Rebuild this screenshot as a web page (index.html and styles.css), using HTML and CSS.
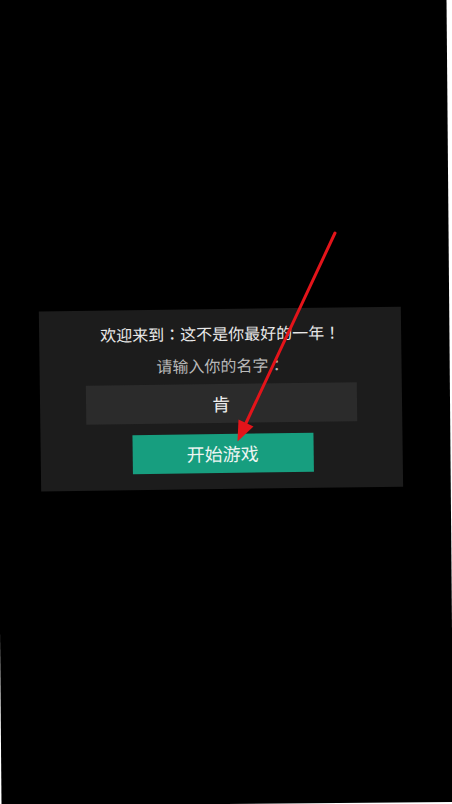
FILE: index.html
```html
<!DOCTYPE html>
<html lang="zh-CN">
<head>
<meta charset="utf-8">
<title>这不是你最好的一年</title>
<link rel="stylesheet" href="styles.css">
</head>
<body>
<div class="screen">
  <div class="panel">
    <div class="title">欢迎来到<span class="punct" lang="zh-TW">：</span>这不是你最好的一年<span class="punct" lang="zh-TW">！</span></div>
    <div class="prompt">请输入你的名字<span class="punct" lang="zh-TW">：</span></div>
    <div class="name-input">肯</div>
    <div class="start-btn">开始游戏</div>
  </div>
</div>
<svg class="arrow" width="452" height="804" viewBox="0 0 452 804">
  <line x1="335" y1="233" x2="246" y2="423" stroke="#e3141a" stroke-width="3" stroke-linecap="round"/>
  <polygon points="237.5,441.5 253.5,426.5 238.5,419.5" fill="#e3141a"/>
</svg>
</body>
</html>
```
FILE: styles.css
```css
html, body {
  margin: 0;
  padding: 0;
  background: #ffffff;
  overflow: hidden;
  width: 452px;
  height: 804px;
}
body {
  position: relative;
  font-family: "Noto Sans CJK SC", "Noto Sans", sans-serif;
}
.screen {
  width: 452px;
  height: 806px;
  margin: -2.5px 0 0 -2px;
  background: #000000;
  transform: rotate(-0.5deg);
  padding: 311px 0 0 42px;
  box-sizing: border-box;
}
.panel {
  width: 362px;
  height: 180px;
  box-sizing: border-box;
  background: #1c1c1c;
  padding: 12.5px 0 0;
  display: flex;
  flex-direction: column;
  align-items: center;
  transform: rotate(-0.25deg);
}
.title {
  font-size: 16px;
  line-height: 22px;
  color: #e8e8e8;
  white-space: nowrap;
}
.punct {
  font-family: "Noto Sans CJK TC", "Noto Sans CJK SC", sans-serif;
}
.prompt {
  margin-top: 10.5px;
  font-size: 16px;
  line-height: 22px;
  color: #b9b9b9;
  white-space: nowrap;
}
.name-input {
  margin-top: 7.5px;
  width: 271px;
  height: 39px;
  background: #2b2b2b;
  color: #f0f0f0;
  font-size: 18px;
  line-height: 39px;
  text-align: center;
}
.start-btn {
  margin-top: 11px;
  margin-left: 2px;
  width: 181px;
  height: 39px;
  background: #179e7f;
  color: #eef5f2;
  font-size: 18px;
  line-height: 39px;
  text-align: center;
}
.arrow {
  position: absolute;
  left: 0;
  top: 0;
}
```
